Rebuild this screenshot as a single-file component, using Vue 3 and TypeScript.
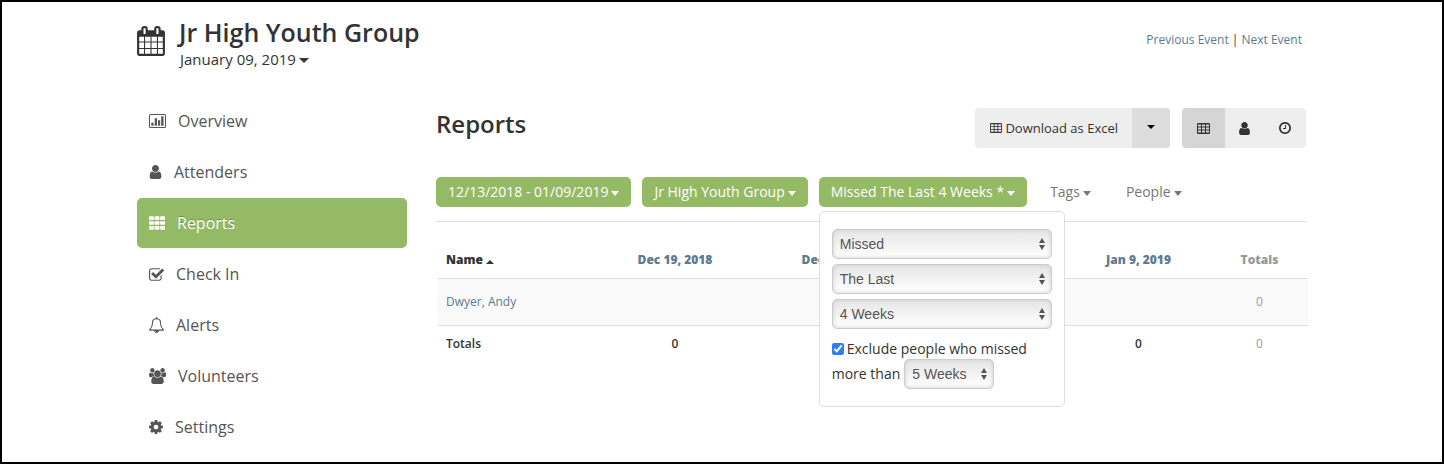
<script setup lang="ts">
import { ref } from 'vue'

interface Icon { box: string; w: number; h: number; d: string }

const cell = (x: number, y: number, w: number, h: number) => `M${x} ${y}h${w}v${h}h${-w}z`
const pill = (x: number, y: number) =>
  `M${x + 96} ${y}h320q96 0 96 96v192q0 96-96 96h-320q-96 0-96-96v-192q0-96 96-96z`
const grid = (xs: number[], ys: number[], f: (x: number, y: number) => string) =>
  ys.map(y => xs.map(x => f(x, y)).join('')).join('')

const user = 'M1536 1399q0 109-62.5 187t-150.5 78h-854q-88 0-150.5-78t-62.5-187q0-85 8.5-160.5t31.5-152 58.5-131 94-89 134.5-34.5q131 128 313 128t313-128q76 0 134.5 34.5t94 89 58.5 131 31.5 152 8.5 160.5zm-256-887q0 159-112.5 271.5t-271.5 112.5-271.5-112.5-112.5-271.5 112.5-271.5 271.5-112.5 271.5 112.5 112.5 271.5z'
const table = 'M160 128h1344q66 0 113 47t47 113v1088q0 66-47 113t-113 47h-1344q-66 0-113-47t-47-113v-1088q0-66 47-113t113-47z'
  + grid([128, 640, 1152], [320, 704, 1088], (x, y) => cell(x, y, 384, 256))
const clock = 'M1024 544v448q0 14-9 23t-23 9h-320q-14 0-23-9t-9-23v-64q0-14 9-23t23-9h224v-352q0-14 9-23t23-9h64q14 0 23 9t9 23zm416 352q0-148-73-273t-198-198-273-73-273 73-198 198-73 273 73 273 198 198 273 73 273-73 198-198 73-273zm224 0q0 209-103 385.5t-279.5 279.5-385.5 103-385.5-103-279.5-279.5-103-385.5 103-385.5 279.5-279.5 385.5-103 385.5 103 279.5 279.5 103 385.5z'
const calendar = 'M128 1664h288v-288h-288v288zm352 0h320v-288h-320v288zm-352-352h288v-320h-288v320zm352 0h320v-320h-320v320zm-352-384h288v-288h-288v288zm736 736h320v-288h-320v288zm-384-736h320v-288h-320v288zm768 736h288v-288h-288v288zm-384-352h320v-320h-320v320zm-352-864v-288q0-13-9.5-22.5t-22.5-9.5h-64q-13 0-22.5 9.5t-9.5 22.5v288q0 13 9.5 22.5t22.5 9.5h64q13 0 22.5-9.5t9.5-22.5zm736 864h288v-320h-288v320zm-384-384h320v-288h-320v288zm384 0h288v-288h-288v288zm32-480v-288q0-13-9.5-22.5t-22.5-9.5h-64q-13 0-22.5 9.5t-9.5 22.5v288q0 13 9.5 22.5t22.5 9.5h64q13 0 22.5-9.5t9.5-22.5zm384-64v1280q0 52-38 90t-90 38h-1408q-52 0-90-38t-38-90v-1280q0-52 38-90t90-38h128v-96q0-66 47-113t113-47h64q66 0 113 47t47 113v96h384v-96q0-66 47-113t113-47h64q66 0 113 47t47 113v96h128q52 0 90 38t38 90z'

const icons: Record<string, Icon> = {
  chart: {
    box: '0 0 17 14', w: 17, h: 14,
    d: 'M1.5 0h14a1.5 1.5 0 0 1 1.5 1.5v11a1.5 1.5 0 0 1-1.5 1.5h-14a1.5 1.5 0 0 1-1.5-1.5v-11a1.5 1.5 0 0 1 1.5-1.5zM1.5 1a.5.5 0 0 0-.5.5v11a.5.5 0 0 0 .5.5h14a.5.5 0 0 0 .5-.5v-11a.5.5 0 0 0-.5-.5zM2.3 8.7h2.3v3.1h-2.3zM5.7 4.2h2.3v7.6h-2.3zM9 6.2h2.2v5.6h-2.2zM12.2 2.3h2.3v9.5h-2.3z',
  },
  user: { box: '256 128 1280 1536', w: 13, h: 14, d: user },
  th: { box: '0 0 1664 1408', w: 16, h: 14, d: grid([0, 576, 1152], [0, 512, 1024], pill) },
  check: {
    box: '64 128 1664 1408', w: 15, h: 13,
    d: 'M1472 930v318q0 119-84.5 203.5t-203.5 84.5h-832q-119 0-203.5-84.5t-84.5-203.5v-832q0-119 84.5-203.5t203.5-84.5h832q63 0 117 25 15 7 18 23 3 17-9 29l-49 49q-10 10-23 10-3 0-9-2-23-6-45-6h-832q-66 0-113 47t-47 113v832q0 66 47 113t113 47h832q66 0 113-47t47-113v-254q0-13 9-22l64-64q10-10 23-10 6 0 12 3 20 8 20 29zm231-489l-814 814q-24 24-57 24t-57-24l-430-430q-24-24-24-57t24-57l110-110q24-24 57-24t57 24l263 263 647-647q24-24 57-24t57 24l110 110q24 24 24 57t-24 57z',
  },
  bell: {
    box: '64 0 1664 1792', w: 15, h: 16,
    d: 'M912 1696q0-16-16-16-59 0-101.5-42.5t-42.5-101.5q0-16-16-16t-16 16q0 73 51.5 124.5t124.5 51.5q16 0 16-16zm-666-288h1300q-266-300-266-832 0-51-24-105t-69-103-121.5-80.5-169.5-31.5-169.5 31.5-121.5 80.5-69 103-24 105q0 532-266 832zm1482 0q0 52-38 90t-90 38h-448q0 106-75 181t-181 75-181-75-75-181h-448q-52 0-90-38t-38-90q50-42 91-88t85-119.5 74.5-158.5 50-206 19.5-260q0-152 117-282.5t307-158.5q-8-19-8-39 0-40 28-68t68-28 68 28 28 68q0 20-8 39 190 28 307 158.5t117 282.5q0 139 19.5 260t50 206 74.5 158.5 85 119.5 91 88z',
  },
  users: {
    box: '0 0 1920 1792', w: 17, h: 16,
    d: 'M593 896q-162 5-265 128h-134q-82 0-138-40.5t-56-118.5q0-353 124-353 6 0 43.5 21t97.5 42.5 119 21.5q67 0 133-23-5 37-5 66 0 159 93 293zm1071 637q0 120-73 189.5t-194 69.5h-874q-121 0-194-69.5t-73-189.5q0-53 3.5-103.5t14-109 26.5-108.5 43-97.5 62-81 85.5-53.5 111.5-20q10 0 43 21.5t73 48 107 48 135 21.5 135-21.5 107-48 73-48 43-21.5q61 0 111.5 20t85.5 53.5 62 81 43 97.5 26.5 108.5 14 109 3.5 103.5zm-1024-1277q0 106-75 181t-181 75-181-75-75-181 75-181 181-75 181 75 75 181zm704 384q0 159-112.5 271.5t-271.5 112.5-271.5-112.5-112.5-271.5 112.5-271.5 271.5-112.5 271.5 112.5 112.5 271.5zm576 225q0 78-56 118.5t-138 40.5h-134q-103-123-265-128 93-134 93-293 0-29-5-66 66 23 133 23 59 0 119-21.5t97.5-42.5 43.5-21q124 0 124 353zm-128-609q0 106-75 181t-181 75-181-75-75-181 75-181 181-75 181 75 75 181z',
  },
  cog: {
    box: '128 128 1536 1536', w: 14, h: 14,
    d: 'M1152 896q0-106-75-181t-181-75-181 75-75 181 75 181 181 75 181-75 75-181zm512-109v222q0 12-8 23t-20 13l-185 28q-19 54-39 91 35 50 107 138 10 12 10 25t-9 23q-27 37-99 108t-94 71q-12 0-26-9l-138-108q-44 23-91 38-16 136-29 186-7 28-36 28h-222q-14 0-24.5-8.5t-11.5-21.5l-28-184q-49-16-90-37l-141 107q-10 9-25 9-14 0-25-11-126-114-165-168-7-10-7-23 0-12 8-23 15-21 51-66.5t54-70.5q-27-50-41-99l-183-27q-13-2-21-12.5t-8-23.5v-222q0-12 8-23t19-13l186-28q14-46 39-92-40-57-107-138-10-12-10-24 0-10 9-23 26-36 98.5-107.5t94.5-71.5q13 0 26 10l138 107q44-23 91-38 16-136 29-186 7-28 36-28h222q14 0 24.5 8.5t11.5 21.5l28 184q49 16 90 37l142-107q9-9 24-9 13 0 25 10 129 119 165 170 7 8 7 22 0 12-8 23-15 21-51 66.5t-54 70.5q26 50 41 98l183 28q13 2 21 12.5t8 23.5z',
  },
}

const nav = [
  { label: 'Overview', icon: 'chart' },
  { label: 'Attenders', icon: 'user' },
  { label: 'Reports', icon: 'th' },
  { label: 'Check In', icon: 'check' },
  { label: 'Alerts', icon: 'bell' },
  { label: 'Volunteers', icon: 'users' },
  { label: 'Settings', icon: 'cog' },
]
const current = ref('Reports')

const views: { label: string; icon: Icon }[] = [
  { label: 'Table view', icon: { box: '0 128 1664 1408', w: 13, h: 11, d: table } },
  { label: 'People view', icon: { box: '256 128 1280 1536', w: 11, h: 13, d: user } },
  { label: 'Time view', icon: { box: '128 128 1536 1536', w: 12, h: 12, d: clock } },
]
const view = ref('Table view')

const status = ref('Missed')
const range = ref('The Last')
const weeks = ref('4 Weeks')
const limit = ref('5 Weeks')
const exclude = ref(true)
const weekOptions = ['1 Week', '2 Weeks', '3 Weeks', '4 Weeks', '5 Weeks', '6 Weeks']
const dates = ['Dec 19, 2018', 'Dec 26, 2018', 'Jan 2, 2019', 'Jan 9, 2019']
</script>

<template>
  <div class="page">
    <div class="container">
      <header class="top">
        <svg class="calendar" viewBox="0 0 1664 1792" width="28" height="30" aria-hidden="true"><path :d="calendar" /></svg>
        <div class="event">
          <h1>Jr High Youth Group</h1>
          <button type="button" class="date">January 09, 2019 <i class="caret"></i></button>
        </div>
        <div class="pager"><a href="#">Previous Event</a> | <a href="#">Next Event</a></div>
      </header>
      <div class="body">
        <nav class="side">
          <a v-for="n in nav" :key="n.label" href="#" :class="{ active: n.label === current }" @click.prevent="current = n.label">
            <svg :viewBox="icons[n.icon].box" :width="icons[n.icon].w" :height="icons[n.icon].h" aria-hidden="true"><path fill-rule="evenodd" :d="icons[n.icon].d" /></svg>
            <span>{{ n.label }}</span>
          </a>
        </nav>
        <main>
          <div class="heading">
            <h2>Reports</h2>
            <div class="group">
              <button type="button" class="download">
                <svg viewBox="0 128 1664 1408" width="12" height="10" aria-hidden="true"><path fill-rule="evenodd" :d="table" /></svg>
                Download as Excel
              </button>
              <button type="button" class="more" aria-label="More download options"><i class="caret"></i></button>
            </div>
            <div class="group views">
              <button v-for="v in views" :key="v.label" type="button" :aria-label="v.label" :class="{ on: v.label === view }" @click="view = v.label">
                <svg :viewBox="v.icon.box" :width="v.icon.w" :height="v.icon.h" aria-hidden="true"><path fill-rule="evenodd" :d="v.icon.d" /></svg>
              </button>
            </div>
          </div>
          <div class="filters">
            <button type="button" class="chip">12/13/2018 - 01/09/2019 <i class="caret"></i></button>
            <button type="button" class="chip">Jr High Youth Group <i class="caret"></i></button>
            <div class="anchor">
              <button type="button" class="chip">Missed The Last 4 Weeks * <i class="caret"></i></button>
              <form class="menu" @submit.prevent>
                <div class="pick"><select v-model="status" aria-label="Attendance"><option>Missed</option><option>Attended</option></select></div>
                <div class="pick"><select v-model="range" aria-label="Range"><option>The Last</option><option>Any</option></select></div>
                <div class="pick"><select v-model="weeks" aria-label="Weeks"><option v-for="w in weekOptions" :key="w">{{ w }}</option></select></div>
                <div class="exclude">
                  <input id="exclude" v-model="exclude" type="checkbox">
                  <label for="exclude">Exclude people who missed</label>
                </div>
                <div class="limit">
                  <label for="limit">more than</label>
                  <div class="pick short"><select id="limit" v-model="limit"><option v-for="w in weekOptions" :key="w">{{ w }}</option></select></div>
                </div>
              </form>
            </div>
            <button type="button" class="plain">Tags <i class="caret"></i></button>
            <button type="button" class="plain">People <i class="caret"></i></button>
          </div>
          <table>
            <colgroup>
              <col class="c-name"><col class="c-dec" span="2"><col class="c-jan" span="2"><col class="c-total">
            </colgroup>
            <thead>
              <tr>
                <th class="name">Name <i class="caret up"></i></th>
                <th v-for="d in dates" :key="d"><a href="#">{{ d }}</a></th>
                <th class="total">Totals</th>
              </tr>
            </thead>
            <tbody>
              <tr class="person">
                <td class="name"><a href="#">Dwyer, Andy</a></td>
                <td v-for="d in dates" :key="d"></td>
                <td class="total">0</td>
              </tr>
              <tr class="sum">
                <td class="name">Totals</td>
                <td v-for="d in dates" :key="d">0</td>
                <td class="total">0</td>
              </tr>
            </tbody>
          </table>
        </main>
      </div>
    </div>
  </div>
</template>

<style>
body { margin: 0; }
</style>

<style scoped>
* { box-sizing: border-box; }
.page {
  min-height: 100vh;
  border: 2px solid #000;
  background: #fff;
  color: #333;
  font: 14px/20px "Open Sans", sans-serif;
}
.container { max-width: 1170px; margin: 0 auto; }
svg { display: block; fill: currentColor; flex: none; }
button { font: inherit; color: inherit; border: 0; background: none; padding: 0; cursor: pointer; display: flex; align-items: center; white-space: nowrap; }
a { color: #5c7a94; text-decoration: none; }
h1, h2 { margin: 0; font-size: 24px; font-weight: 600; }
.caret { display: inline-block; flex: none; border: 4px solid transparent; border-top: 5px solid currentColor; border-bottom: 0; margin: 3px 0 0 3px; }
.caret.up { border-bottom: 4px solid currentColor; border-top: 0; margin: 0; }

.top { display: flex; height: 94px; padding-top: 15px; }
.calendar { margin-top: 9px; }
.event { margin-left: 14px; }
.event h1 { font-size: 25px; line-height: 30px; }
.date { font-size: 15px; line-height: 24px; margin-left: 1px; }
.date .caret { border-left-width: 5px; border-right-width: 5px; }
.pager { margin: 13px 5px 0 auto; font-size: 12px; }

.body { display: flex; gap: 29px; }
.side { width: 270px; flex: none; display: flex; flex-direction: column; gap: 1px; }
.side a { display: flex; align-items: center; gap: 12px; height: 50px; padding: 0 12px; border-radius: 5px; color: #555; font-size: 16px; }
.side .active { background: #94ba65; color: #fff; font-weight: 500; text-shadow: 0 -1px 0 rgba(0, 0, 0, .25); }

main { flex: 1; min-width: 0; padding: 12px 1px 0 0; }
.heading { display: flex; height: 40px; gap: 12px; }
.heading h2 { flex: 1; line-height: 32px; }
.group { display: flex; height: 40px; background: #eee; border-radius: 4px; overflow: hidden; font-size: 13px; }
.download { padding: 0 14px 0 15px; gap: 3px; }
.more { width: 38px; justify-content: center; background: #ddd; color: #000; }
.more .caret { margin: 0 0 3px; border-top-width: 4px; }
.views button { width: 39px; justify-content: center; }
.views button:first-child { width: 43px; }
.views button:last-child { width: 42px; }
.views .on { background: #d5d5d5; }

.filters { display: flex; gap: 11px; padding: 29px 0 14px; border-bottom: 1px solid #ddd; }
.filters button { height: 30px; padding: 0 12px; }
.chip { background: #94ba65; color: #fff; font-weight: 500; border-radius: 5px; }
.filters .plain { color: #777; }
.anchor { position: relative; }
.menu { position: absolute; z-index: 2; top: 34px; left: 0; width: 246px; padding: 17px 12px; background: #fff; border: 1px solid #ddd; border-radius: 5px; }
.pick { position: relative; height: 30px; margin-bottom: 5px; }
.pick::before, .pick::after { content: ""; position: absolute; right: 7px; border: 3px solid transparent; pointer-events: none; }
.pick::before { top: 9px; border-top: 0; border-bottom: 5px solid #555; }
.pick::after { bottom: 9px; border-bottom: 0; border-top: 5px solid #555; }
select { appearance: none; width: 100%; height: 30px; padding: 0 7px; border: 1px solid #ccc; border-radius: 5px; background: linear-gradient(#e6e6e6, #fff); box-shadow: inset 0 0 4px #ccc; color: #555; font: 14px "Liberation Sans", Arial, sans-serif; }
.exclude, .limit { display: flex; align-items: center; white-space: nowrap; }
.exclude { padding-top: 5px; }
.exclude input { width: 12px; height: 12px; margin: 0 3px 0 0; accent-color: #2f7df6; }
.limit { gap: 4px; }
.exclude label, .limit label { line-height: 20px; }
.pick.short { width: 90px; margin: 0; }

table { width: 100%; margin: 18px 0 0 2px; border-spacing: 0; table-layout: fixed; font-size: 12px; text-align: center; }
.c-name { width: 155px; }
.c-dec { width: 164px; }
.c-jan { width: 145px; }
.c-total { width: 97px; }
th, td { padding: 0 8px; }
th { height: 38px; padding-top: 2px; font-weight: 800; }
td { border-top: 1px solid #ddd; }
.name { text-align: left; }
.person td { height: 47px; background: #f9f9f9; }
.sum td { height: 36px; font-weight: 600; }
th.total { color: #999; }
td.total, .sum td.total { color: #999; font-weight: 400; }
</style>
